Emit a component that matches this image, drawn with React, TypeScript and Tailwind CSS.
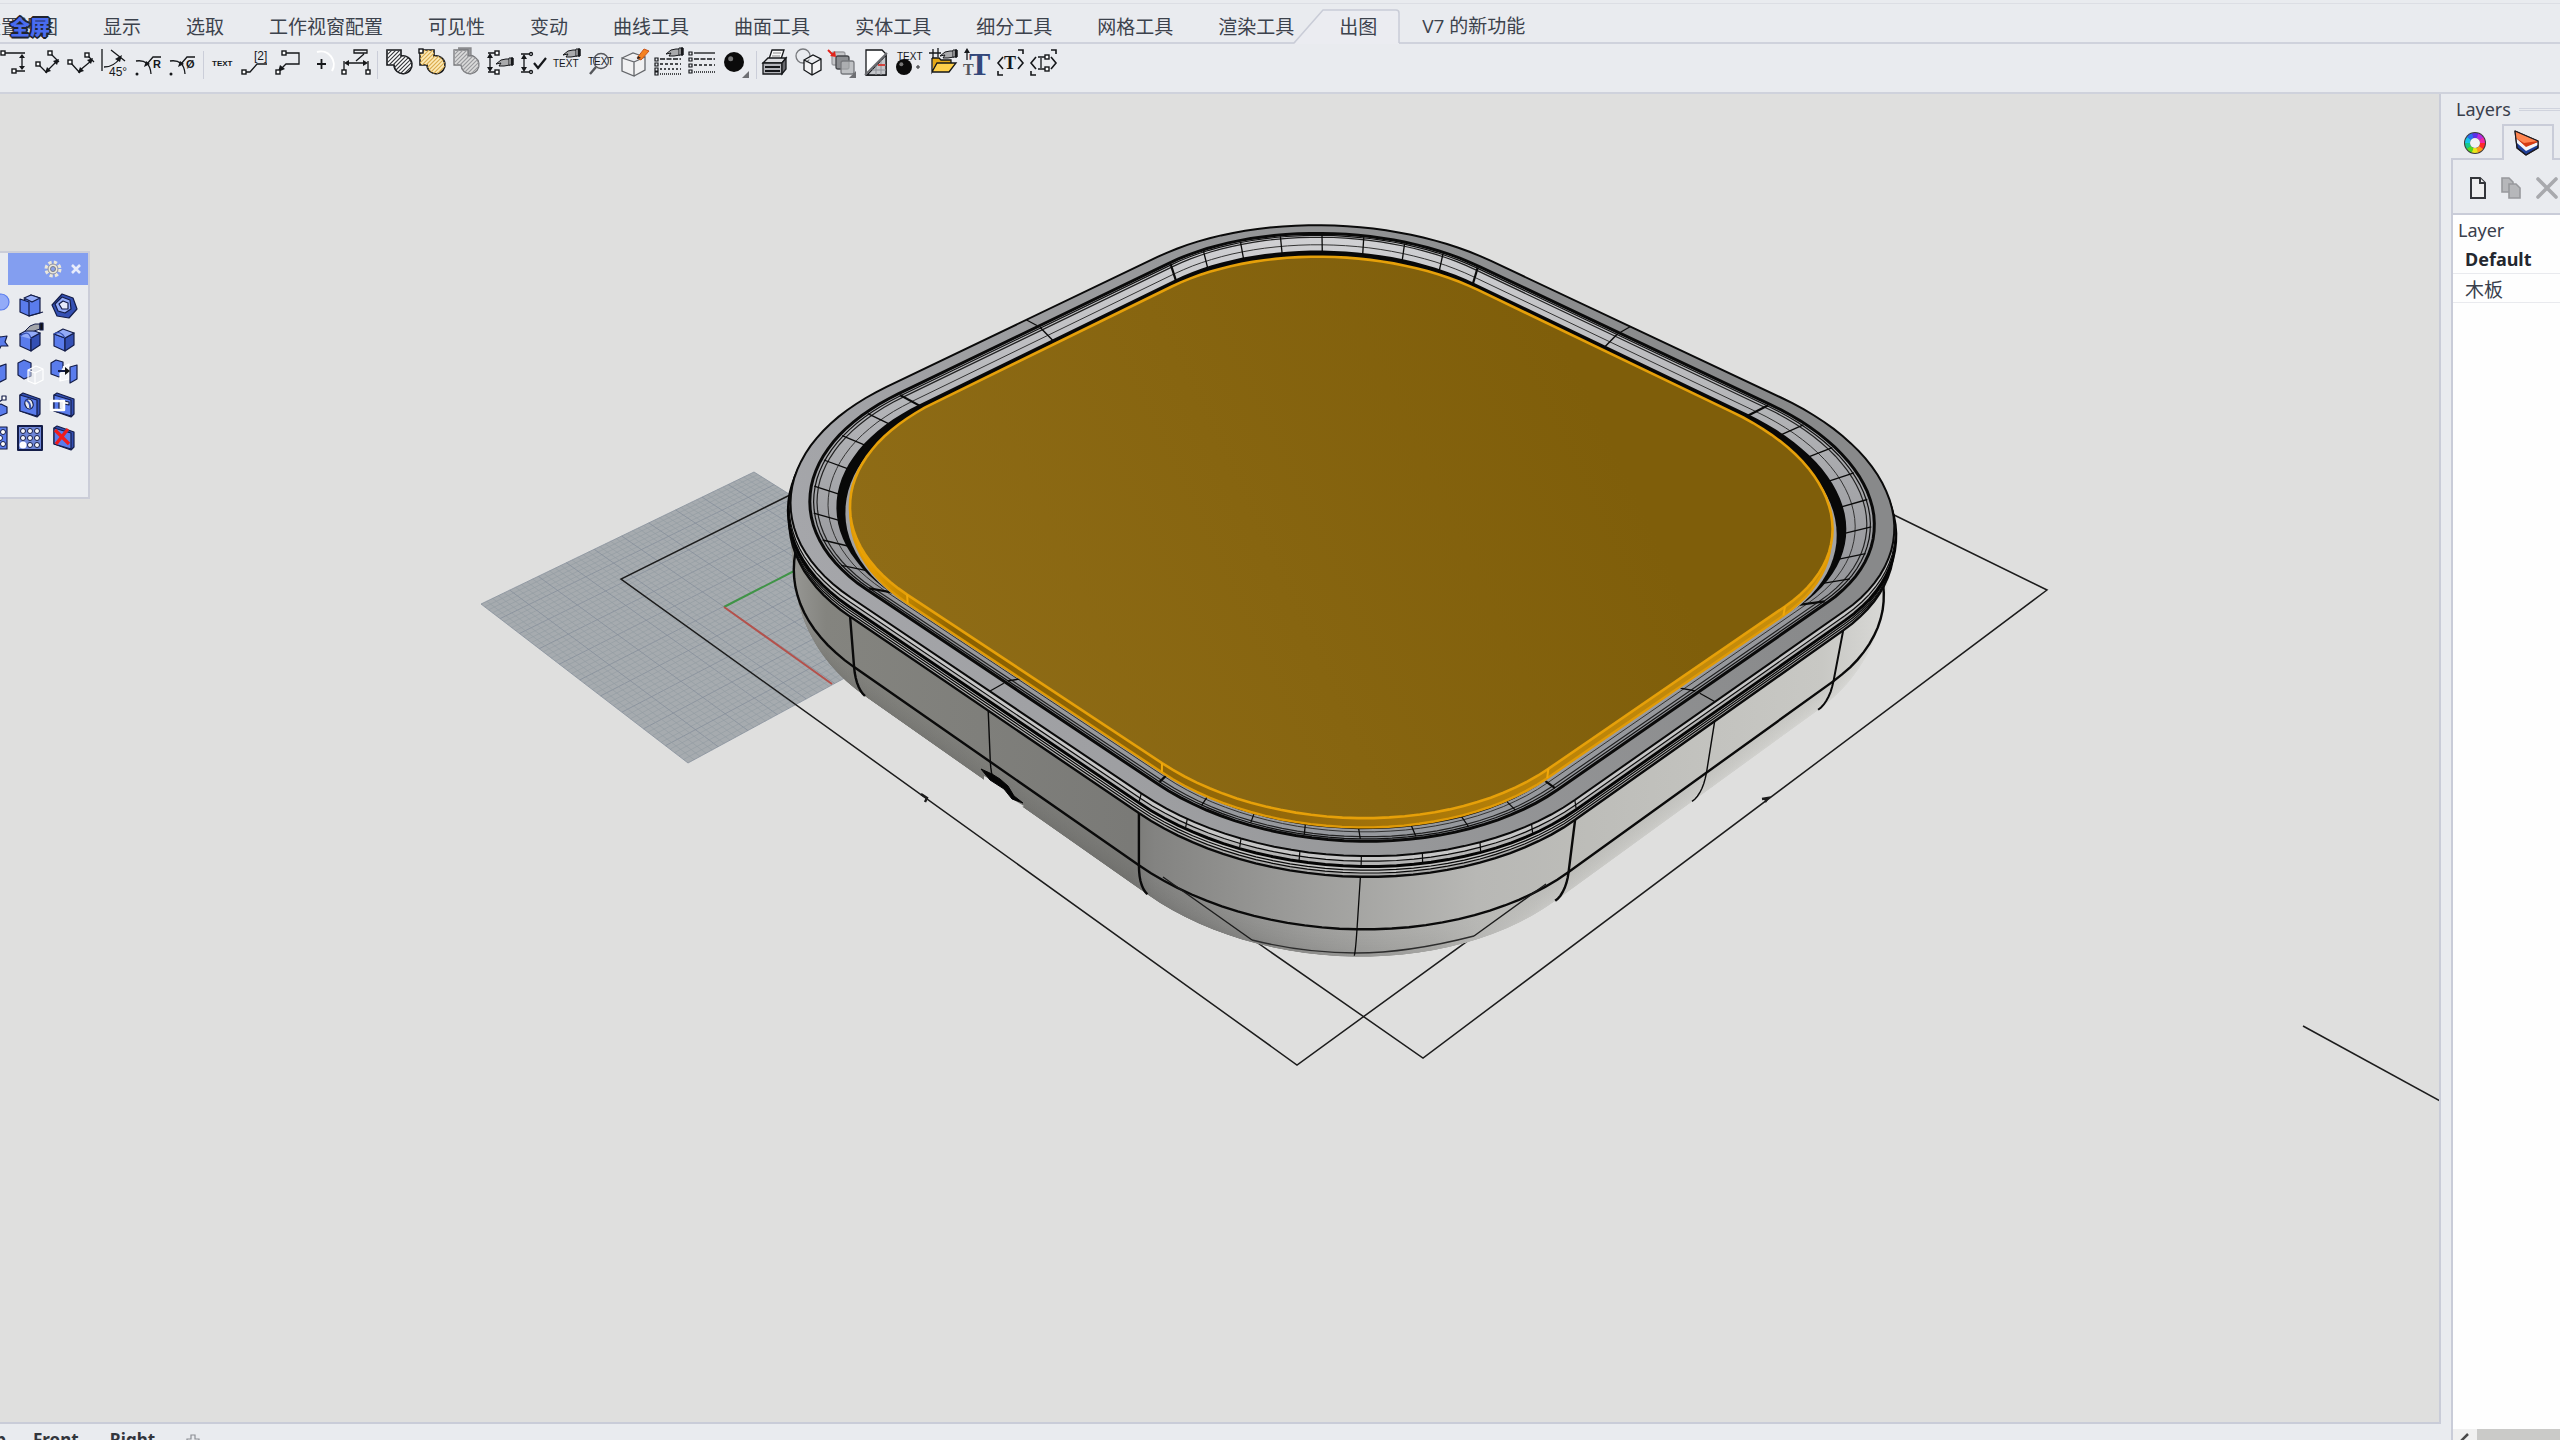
import React from "react";

type Pt = [number, number];
type Kids = { children?: React.ReactNode };

/* ---------- perspective camera ---------- */

function squareToQuad([x0, y0]: Pt, [x1, y1]: Pt, [x2, y2]: Pt, [x3, y3]: Pt) {
  const dx1 = x1 - x2, dx2 = x3 - x2, sx = x0 - x1 + x2 - x3;
  const dy1 = y1 - y2, dy2 = y3 - y2, sy = y0 - y1 + y2 - y3;
  const det = dx1 * dy2 - dy1 * dx2;
  const g = (sx * dy2 - sy * dx2) / det;
  const h = (dx1 * sy - dy1 * sx) / det;
  return (u: number, v: number, z = 0): Pt => {
    const w = g * u + h * v + 1 + z;
    return [
      ((x1 - x0 + g * x1) * u + (x3 - x0 + h * x3) * v + x0 + 1140 * z) / w,
      ((y1 - y0 + g * y1) * u + (y3 - y0 + h * y3) * v + y0 + 4300 * z) / w,
    ];
  };
}

const tray = squareToQuad([1320, 214], [1930, 507], [1363, 896], [752, 492]);
const floor = squareToQuad([754, 472], [972, 609], [688, 763], [481, 604]);

const BOARD = 0.29;
const SHELL = 0.261;
const str = (p: Pt) => `${p[0].toFixed(1)} ${p[1].toFixed(1)}`;

/** Corner q: 0 right, 1 bottom, 2 left, 3 top; t runs 0..1 through the arc; c is the inset of the arc centre. */
function corner(q: number, t: number, d: number, z: number, c = SHELL): Pt {
  const a = ((q - 1 + t) * Math.PI) / 2;
  const cu = q < 2 ? 1 - c : c;
  const cv = q === 1 || q === 2 ? 1 - c : c;
  return tray(cu + Math.cos(a) * (c + d), cv + Math.sin(a) * (c + d), z);
}

function ring(d: number, z: number, c = SHELL) {
  const pts: string[] = [];
  for (let q = 0; q < 4; q++) for (let i = 0; i <= 28; i++) pts.push(str(corner(q, i / 28, d, z, c)));
  return `M${pts.join("L")}Z`;
}

function frontRing(d: number, z: number) {
  const pts: string[] = [];
  for (let q = 0; q < 3; q++)
    for (let i = q === 0 ? 12 : 0; i <= (q === 2 ? 16 : 28); i++) pts.push(str(corner(q, i / 28, d, z)));
  return `M${pts.join("L")}`;
}

const WALL = 0.062;
const bodyLevels = Array.from({ length: 14 }, (_, i) => 0.0138 - (i * 0.0114) / 13);
const filletLevels = Array.from({ length: 20 }, (_, i) => {
  const t = ((1 - i / 19) * Math.PI) / 2;
  return { d: WALL - 0.03 + 0.03 * Math.cos(t), z: 0.0138 + 0.0095 * Math.sin(t), o: 0.42 * (1 - i / 19) };
});

const profile: Pt[] = [
  [WALL, 0.0024],
  [WALL, 0.0138],
  ...Array.from({ length: 7 }, (_, i): Pt => {
    const t = ((i + 1) / 7) * 0.95;
    return [WALL - 0.03 + 0.03 * Math.cos(t), 0.0138 + 0.0095 * Math.sin(t)];
  }),
];
const seam = (f: (d: number, z: number) => Pt) => `M${profile.map(([d, z]) => str(f(d, z))).join("L")}`;

const seams: { d: string; w: number }[] = [
  { d: seam((d, z) => corner(2, 0, d, z)), w: 2.4 },
  { d: seam((d, z) => tray(0.5, 1 + d, z)), w: 1.4 },
  { d: seam((d, z) => corner(1, 1, d, z)), w: 2.4 },
  { d: seam((d, z) => corner(1, 0.5, d, z)), w: 1.3 },
  { d: seam((d, z) => corner(1, 0, d, z)), w: 2.4 },
  { d: seam((d, z) => tray(1 + d, 0.5, z)), w: 1.4 },
  { d: seam((d, z) => corner(0, 1, d, z)), w: 2 },
];

const ticks: { d: string; w: number }[] = [];
for (let q = 0; q < 4; q++)
  for (let i = 0; i <= 8; i++) {
    const w = i === 0 || i === 8 ? 2.2 : 1.3;
    ticks.push({ d: `M${str(corner(q, i / 8, 0.032, -0.0015))}L${str(corner(q, i / 8, 0.006, 0.0004, 0.275))}`, w });
  }
const mids: ((d: number, z: number) => Pt)[] = [
  (d, z) => tray(0.5, 1 + d, z),
  (d, z) => tray(1 + d, 0.5, z),
  (d, z) => tray(0.5, -d, z),
  (d, z) => tray(-d, 0.5, z),
];
mids.forEach((m) => {
  ticks.push({ d: `M${str(m(0.032, -0.0015))}L${str(m(0.006, 0))}`, w: 1.4 });
  ticks.push({ d: `M${str(m(0.058, -0.0015))}L${str(m(0.038, -0.0015))}`, w: 1.2 });
});
const lipTicks = [0, 1, 2, 3, 4, 5, 6, 7, 8].map(
  (i) => `M${str(corner(1, i / 8, 0.0585, -0.0015))}L${str(corner(1, i / 8, 0.0615, 0))}`,
);
const boardSeams = [
  [2, 0],
  [1, 1],
  [1, 0],
  [0, 1],
].map(([q, t]) => `M${str(corner(q, t, 0, 0, BOARD))}L${str(corner(q, t, 0, 0.002, BOARD))}`);

const gridLines: { d: string; major: boolean }[] = [];
for (let i = 0; i <= 50; i++) {
  const k = i / 50;
  gridLines.push({ d: `M${str(floor(k, 0))}L${str(floor(k, 1))}`, major: i % 5 === 0 });
  gridLines.push({ d: `M${str(floor(0, k))}L${str(floor(1, k))}`, major: i % 5 === 0 });
}

function Scene() {
  return (
    <svg className="absolute left-0 top-0" width="2442" height="1423" viewBox="0 0 2442 1423" role="img" aria-label="Perspective viewport" fill="none">
      <defs>
        <linearGradient id="gold" gradientUnits="userSpaceOnUse" x1="900" y1="640" x2="1560" y2="330">
          <stop offset="0" stopColor="#8f6c16" />
          <stop offset="1" stopColor="#7f5e0a" />
        </linearGradient>
        <linearGradient id="goldSide" gradientUnits="userSpaceOnUse" x1="860" y1="0" x2="1820" y2="0">
          <stop offset="0" stopColor="#f0a500" />
          <stop offset=".1" stopColor="#8a6000" />
          <stop offset=".45" stopColor="#94690a" />
          <stop offset=".7" stopColor="#b98208" />
          <stop offset="1" stopColor="#c98f0c" />
        </linearGradient>
        <linearGradient id="wall" gradientUnits="userSpaceOnUse" x1="787" y1="0" x2="1900" y2="0">
          <stop offset="0" stopColor="#9a9a97" />
          <stop offset=".035" stopColor="#84847f" />
          <stop offset=".31" stopColor="#7a7a77" />
          <stop offset=".33" stopColor="#838381" />
          <stop offset=".46" stopColor="#9c9c9a" />
          <stop offset=".62" stopColor="#b8b8b5" />
          <stop offset=".72" stopColor="#bdbdb9" />
          <stop offset=".93" stopColor="#c8c8c4" />
          <stop offset="1" stopColor="#dcdcda" />
        </linearGradient>
        <linearGradient id="under" gradientUnits="userSpaceOnUse" x1="787" y1="0" x2="1900" y2="0">
          <stop offset="0" stopColor="#50504e" />
          <stop offset=".4" stopColor="#4c4c4a" />
          <stop offset=".58" stopColor="#7c7c7a" />
          <stop offset=".68" stopColor="#f4f4f4" />
          <stop offset="1" stopColor="#ffffff" />
        </linearGradient>
        <linearGradient id="rim" gradientUnits="userSpaceOnUse" x1="790" y1="600" x2="1700" y2="260">
          <stop offset="0" stopColor="#a6a7ab" />
          <stop offset=".45" stopColor="#98999b" />
          <stop offset="1" stopColor="#88898a" />
        </linearGradient>
        <linearGradient id="trough" gradientUnits="userSpaceOnUse" x1="0" y1="225" x2="0" y2="850">
          <stop offset="0" stopColor="#d2d2d5" />
          <stop offset=".25" stopColor="#b8b9bc" />
          <stop offset=".55" stopColor="#97989c" />
          <stop offset="1" stopColor="#96999e" />
        </linearGradient>
      </defs>

      {/* construction plane */}
      <path d="M754 472L972 609L688 763L481 604Z" fill="#a6abaf" />
      {gridLines.map((l, i) => (
        <path key={i} d={l.d} stroke={l.major ? "#848e9a" : "#949ca3"} strokeWidth="1" strokeOpacity={l.major ? 0.75 : 0.65} />
      ))}
      <path d="M724 607L800 568" stroke="#3f9446" strokeWidth="2" />
      <path d="M724 607L832 684" stroke="#b4514b" strokeWidth="2" />

      {/* curves lying on the floor */}
      <g stroke="#1c1c1c" strokeWidth="1.5">
        <path d="M800 490L621 579L1297 1065L1546 884" />
        <path d="M1890 513L2047 590L1423 1058L1163 877" />
        <path d="M2303 1026L2442 1102" />
        <path d="M921 794l6 4l-2 4M1762 799l6-1l-3 4" strokeWidth="2.4" />
      </g>

      {/* tray body */}
      {filletLevels.map((l, i) => (
        <g key={i}>
          <path d={ring(l.d, l.z)} fill="url(#wall)" />
          <path d={ring(l.d, l.z)} fill="url(#under)" fillOpacity={l.o} />
        </g>
      ))}
      {bodyLevels.map((z, i) => (
        <path key={i} d={ring(WALL, z)} fill="url(#wall)" />
      ))}
      <path d={frontRing(WALL, 0.0138)} stroke="#0a0a0a" strokeWidth="2.4" />
      <path d="M1252 940Q1304 953 1356 953T1474 936" stroke="#2c2c2c" strokeWidth="1.4" />
      {seams.map((s, i) => (
        <path key={i} d={s.d} stroke="#0a0a0a" strokeWidth={s.w} />
      ))}
      <path d="M984 776L1000 784L1008 790L1014 800L1024 806L1012 812L984 790Z" fill="#dfdfde" />
      <path d="M981 769L992 774L1000 779L1008 786L1014 796L1023 803L1012 799L1004 789L990 780Z" fill="#050505" stroke="#050505" strokeWidth="1" />
      <path d="M1163 877L1252 940M1474 936L1546 884" stroke="#1c1c1c" strokeWidth="1.4" />

      {/* stepped lip below the rim */}
      <path d={ring(WALL, 0.0024)} fill="#a9a9a8" stroke="#0a0a0a" strokeWidth="2.4" />
      <path d={ring(0.062, 0.0016)} fill="#c2c2c1" stroke="#0a0a0a" strokeWidth="1.2" />
      <path d={ring(0.062, 0.001)} fill="#c2c2c1" stroke="#0a0a0a" strokeWidth="1.2" />
      <path d={ring(0.062, 0.0002)} fill="#b4b4b4" stroke="#050505" strokeWidth="3" />
      <path d={ring(0.0605, -0.0007)} fill="#c6c6c6" stroke="#0a0a0a" strokeWidth="1.2" />
      <path d={ring(0.0585, -0.0015)} fill="url(#rim)" stroke="#0a0a0a" strokeWidth="2" />

      {/* inner trough */}
      <path d={ring(0.0355, -0.0015)} fill="url(#trough)" stroke="#0a0a0a" strokeWidth="3" />
      <path d={ring(0.031, -0.0014)} stroke="#111" strokeWidth="1.2" />
      <path d={ring(0.027, -0.0013)} stroke="#222" strokeWidth="1.2" />
      <path d={ring(0.017, -0.0006, 0.268)} stroke="#333" strokeWidth="1" />
      {ticks.map((s, i) => (
        <path key={i} d={s.d} stroke="#0a0a0a" strokeWidth={s.w} />
      ))}
      {lipTicks.map((d, i) => (
        <path key={i} d={d} stroke="#0a0a0a" strokeWidth="1.2" />
      ))}
      <path d={ring(0.009, 0.0001, 0.275)} fill="#080808" stroke="#080808" strokeWidth="2" />
      <path d={ring(0.006, 0.0012, BOARD)} fill="#a2a3a6" />

      {/* wooden board */}
      <path d={ring(0, 0.002, BOARD)} fill="url(#goldSide)" stroke="#e09a06" strokeWidth="2.4" />
      <path d={ring(0, 0, BOARD)} fill="url(#gold)" stroke="#e6a009" strokeWidth="2.6" />
      {boardSeams.map((d, i) => (
        <path key={i} d={d} stroke="#f0a80a" strokeWidth="2" />
      ))}
    </svg>
  );
}

/* ---------- toolbar icons ---------- */

const K = "#15171a";

function Icon({ children, label }: Kids & { label: string }) {
  return (
    <button type="button" aria-label={label} className="flex h-8 min-w-0 flex-1 items-center justify-center">
      <svg width="28" height="28" viewBox="0 0 28 28" fill="none" stroke={K} strokeWidth="1.3" className="shrink-0 overflow-visible">
        {children}
      </svg>
    </button>
  );
}

const Sq = ({ x, y }: { x: number; y: number }) => <rect x={x - 2} y={y - 2} width="4" height="4" fill="#fff" strokeWidth="1.4" />;
const T = ({ x, y, s = 11, b = true, f = "Liberation Sans", c = K, children }: Kids & { x: number; y: number; s?: number; b?: boolean; f?: string; c?: string }) => (
  <text x={x} y={y} fontSize={s} fontWeight={b ? 700 : 400} fontFamily={`${f}, sans-serif`} fill={c} stroke="none">
    {children}
  </text>
);
const Hand = ({ x, y }: { x: number; y: number }) => (
  <g transform={`translate(${x} ${y})`} strokeWidth="1">
    <path d="M0 6L5 2L10 1H14V7L8 8H3L5 5Z" fill="#a9aaac" />
    <path d="M13 0H17V7H13Z" fill="#fff" />
    <path d="M15 0H17V7H15Z" fill="#1b1b1b" />
  </g>
);
const UNION = "M2 1H16V7A9 9 0 1 1 9 16H2Z";
const Hatch = ({ c }: { c: string }) => (
  <g>
    <clipPath id="union-clip"><path d={UNION} /></clipPath>
    <path clipPath="url(#union-clip)" d="M-2 6L8 -4M-2 10L12 -4M-2 14L16 -4M-2 18L20 -4M2 18L24 -4M6 18L24 0M6 22L28 0M8 24L28 4M10 26L30 6M12 28L30 10M16 28L30 14M20 28L30 18" stroke={c} strokeWidth="1.2" />
  </g>
);
const Corner = () => <path d="M28 22V29H21Z" fill="#6e6f73" stroke="none" />;
const Ball = ({ x, y, r }: { x: number; y: number; r: number }) => (
  <g stroke="none">
    <circle cx={x} cy={y} r={r} fill="#0b0b0b" />
    <circle cx={x - r / 3} cy={y - r / 3} r={r / 4} fill="#777" />
  </g>
);

const dims = (
  <>
    <Icon label="Vertical dimension">
      <path d="M4 4H26M15 22H26M23 7V19" />
      <path d="M23 5L20 9H26ZM23 21L20 17H26Z" fill={K} stroke="none" />
      <Sq x={4} y={4} /><Sq x={15} y={22} />
    </Icon>
    <Icon label="Aligned dimension">
      <path d="M17 4L26 13M5 15L14 24M14 22L24 12" />
      <path d="M26 10L20 12L24 16ZM12 24L18 22L14 18Z" fill={K} stroke="none" />
      <Sq x={17} y={4} /><Sq x={5} y={15} />
    </Icon>
    <Icon label="Rotated dimension">
      <path d="M20 6L27 13M3 13L13 24M12 22L24 12" />
      <path d="M26 9L20 11L24 15ZM11 24L17 22L13 18Z" fill={K} stroke="none" />
      <Sq x={3} y={13} /><Sq x={20} y={6} />
    </Icon>
    <Icon label="Angle dimension">
      <path d="M2 0V22M11 1L25 12M4 18Q14 18 20 9" />
      <path d="M22 6L15 10L20 13Z" fill={K} stroke="none" />
      <T x={9} y={27} s={12} b={false}>45°</T>
    </Icon>
    <Icon label="Radius dimension">
      <path d="M2 12Q16 10 17 25M27 8H19L13 15" /><path d="M10 18L12 12L16 15Z" fill={K} stroke="none" />
      <circle cx="3" cy="25" r="1.500" fill={K} stroke="none" /><T x={19} y={19}>R</T>
    </Icon>
    <Icon label="Diameter dimension">
      <path d="M2 12Q16 10 17 25M27 8H19L13 15" /><path d="M10 18L12 12L16 15Z" fill={K} stroke="none" />
      <circle cx="3" cy="25" r="1.500" fill={K} stroke="none" /><T x={18} y={19}>Ø</T>
    </Icon>
  </>
);

const notes = (
  <>
    <Icon label="Text"><T x={4} y={17} s={8}>TEXT</T></Icon>
    <Icon label="Numbered leader">
      <path d="M3 23H9L16 15H26" /><Sq x={3} y={23} /><T x={13} y={11} s={12} b={false}>[2]</T>
    </Icon>
    <Icon label="Leader">
      <path d="M9 4H24V15H11L6 20" /><path d="M3 23L5 16L10 20Z" fill={K} stroke="none" />
      <Sq x={9} y={4} /><Sq x={3} y={23} />
    </Icon>
    <Icon label="Center mark">
      <path d="M8 3A13 13 0 0 1 23 22" stroke="#fff" strokeWidth="2" /><path d="M8 15H17M12.500 10V20" strokeWidth="1.800" />
    </Icon>
    <Icon label="Edit dimension">
      <path d="M2 22V12M26 22V12M4 14H24M12 1H25V4H12ZM22 5L14 12" />
      <path d="M2 14L7 11V17ZM26 14L21 11V17Z" fill={K} stroke="none" />
      <Sq x={2} y={23} /><Sq x={26} y={23} />
    </Icon>
  </>
);

const drafting = (
  <>
    <Icon label="Hatch"><path d={UNION} fill="#fff" strokeWidth="1.600" /><Hatch c="#3b3d41" /></Icon>
    <Icon label="Hatch boundary">
      <path d={UNION} fill="#fdebb8" strokeWidth="1.600" /><Hatch c="#dcae52" /><Sq x={3} y={2} />
    </Icon>
    <Icon label="Match hatch">
      <path d="M6 -1H19V6A8 8 0 1 1 10 18" fill="#96979a" stroke="#88898c" /><path d={UNION} fill="#dcdcdc" stroke="#77787b" /><Hatch c="#9b9c9f" />
    </Icon>
    <Icon label="Dimension properties">
      <path d="M2 4H10M2 23H10M4 6V21" /><path d="M4 4L1 9H7ZM4 23L1 18H7Z" fill={K} stroke="none" />
      <Sq x={11} y={4} /><Sq x={11} y={23} /><Hand x={10} y={9} />
    </Icon>
    <Icon label="Set dimension style">
      <path d="M2 5H11M2 23H11M5 7V21" /><path d="M5 5L2 10H8ZM5 23L2 18H8Z" fill={K} stroke="none" />
      <circle cx="12" cy="5" r="1.500" /><circle cx="12" cy="23" r="1.500" /><path d="M15 14L19 19L27 9" strokeWidth="2.200" />
    </Icon>
    <Icon label="Text properties"><T x={0} y={18} s={10} b={false}>TEXT</T><Hand x={10} y={0} /></Icon>
    <Icon label="Find text">
      <T x={1} y={16} s={10} b={false}>TEXT</T><circle cx="14" cy="12" r="7.500" stroke="#55575b" /><path d="M9 18L3 25" stroke="#55575b" strokeWidth="2.400" />
    </Icon>
    <Icon label="Make 2D drawing">
      <path d="M2 9L14 13V27L2 22ZM14 13L25 8V21L14 27M2 9L13 4L25 8" fill="#f1f1f2" stroke="#66686c" />
      <path d="M17 9L24 0L29 2L21 11Z" fill="#f58220" stroke="#c9551a" strokeWidth="1" /><path d="M17 10L18 7L21 9Z" fill="#222" stroke="none" />
    </Icon>
    <Icon label="Linetype properties">
      <path d="M1 9H4V12H1ZM1 14H4V17H1ZM1 19H4V22H1ZM1 23H4V26H1Z" strokeWidth="1.200" />
      <path d="M6 10H27" strokeDasharray="5 1.500" /><path d="M6 15H27" strokeDasharray="3 2" /><path d="M6 20H27" strokeDasharray="2 2" /><path d="M6 25H27" strokeDasharray="1 1" />
      <Hand x={12} y={-1} />
    </Icon>
    <Icon label="Linetypes">
      <path d="M1 3H4V6H1ZM1 9H4V12H1ZM1 15H4V18H1ZM1 21H4V24H1Z" strokeWidth="1.200" />
      <path d="M6 4H27" /><path d="M6 10H27" strokeDasharray="5 1.500" /><path d="M6 16H27" strokeDasharray="3 2" /><path d="M6 23H27" strokeDasharray="1 1" />
    </Icon>
    <Icon label="Dot"><Ball x={13} y={13} r={10} /><Corner /></Icon>
  </>
);

const output = (
  <>
    <Icon label="Print">
      <path d="M8 10L11 1H23L20 10" fill="#fafafa" /><path d="M12 4H20M11 7H19" stroke="#888" strokeWidth="1" />
      <path d="M2 14L7 9H25L21 14Z" fill="#dcdde0" /><path d="M2 14H21V25H2Z" fill="#b4b5ba" /><path d="M21 14L25 9V20L21 25Z" fill="#66676c" />
      <path d="M4 18H19M4 22H19" strokeWidth="1.800" />
    </Icon>
    <Icon label="Page layout">
      <circle cx="8" cy="7" r="7" stroke="#77797d" />
      <path d="M9 11L18 6L26 10V21L17 26L9 21ZM9 11L17 15L26 10M17 15V26" fill="#f4f4f5" fillOpacity=".8" />
    </Icon>
    <Icon label="Detail views">
      <rect x="4" y="3" width="13" height="13" rx="2" fill="#c4c5c8" stroke="#9b9ca0" />
      <rect x="8" y="7" width="13" height="13" rx="2" fill="#8b8d91" stroke="#44464a" />
      <rect x="13" y="12" width="13" height="13" rx="2" fill="#b4b6b9" fillOpacity=".8" stroke="#77797d" />
      <path d="M0 1L5 6" stroke="#e2231a" strokeWidth="2" /><path d="M8 8L2 7L7 2Z" fill="#e2231a" stroke="none" /><Corner />
    </Icon>
    <Icon label="Clipping drawing">
      <path d="M4 1H20L24 5V26H4Z" fill="#fff" /><path d="M24 6V26H5Z" fill="#c4c6ca" /><path d="M10 21H24M15 16H24M14 16V26M19 11V26" stroke="#909298" strokeWidth="1" />
      <path d="M16 16H23" stroke="#e2231a" strokeWidth="1.500" /><path d="M3 26L25 4" stroke="#6b6d71" strokeWidth="2" />
    </Icon>
    <Icon label="Text dot">
      <T x={1} y={11} s={10} b={false}>TEXT</T><Ball x={8} y={18} r={8} /><circle cx="22" cy="18" r="1.200" strokeWidth="1" />
    </Icon>
    <Icon label="Import annotation styles">
      <path d="M3 9H10L12 11H22V15H8L4 22" fill="#e5a816" /><path d="M3 9V23L8 14H27L20 23H3Z" fill="#ffd04a" />
      <path d="M0 4H12M4 0V9M9 -1V8" strokeWidth="1.300" /><Hand x={11} y={1} />
    </Icon>
    <Icon label="Scale text">
      <T x={6} y={26} s={32} f="Liberation Serif" c="#33477a">T</T><T x={0} y={26} s={16} f="Liberation Serif" c="#55575c">T</T>
      <path d="M4 3V11" /><path d="M4 -1L1 4H7Z" fill={K} stroke="none" />
    </Icon>
    <Icon label="Text style">
      <path d="M6 8L1 14L6 20M21 8L26 14L21 20M21 1H26V5M1 22V26H6" strokeWidth="1.600" /><T x={7} y={20} s={18} f="Liberation Serif">T</T>
    </Icon>
    <Icon label="Dimension style">
      <path d="M6 8L1 14L6 20M21 8L26 14L21 20M21 1H26V5M1 22V26H6" strokeWidth="1.600" /><path d="M8 8H17M8 20H17M11 9V19" />
      <Sq x={17} y={8} /><Sq x={17} y={20} />
    </Icon>
  </>
);

/* ---------- ribbon ---------- */

const tabs = ["显示", "选取", "工作视窗配置", "可见性", "变动", "曲线工具", "曲面工具", "实体工具", "细分工具", "网格工具", "渲染工具"];

function Ribbon() {
  return (
    <header className="shrink-0 bg-[#e9ebef]">
      <div className="h-1 border-b border-[#dcdee4]" />
      <nav className="relative flex h-10 items-stretch gap-[45px] whitespace-nowrap border-b-2 border-[#cfd2dc] text-[19px] text-[#3c424c]">
        <button type="button" className="relative -ml-[18px] shrink-0 pt-1.5">
          设置视图
          <span className="absolute left-7 top-[13px] text-[20px] font-black leading-none text-[#4a6cf0] [text-shadow:2px_0_#20242e,-2px_0_#20242e,0_2px_#20242e,0_-2px_#20242e,1px_1px_#20242e,-1px_-1px_#20242e,1px_-1px_#20242e,-1px_1px_#20242e]">全屏</span>
        </button>
        {tabs.map((t) => (
          <button key={t} type="button" className="shrink-0 pt-1.5">{t}</button>
        ))}
        <button type="button" aria-current="true" className="relative shrink-0 pt-1.5">
          <svg className="absolute -left-[46px] top-[5px]" width="108" height="35" viewBox="0 0 108 35" fill="none">
            <path d="M1 35L30 1H103Q106 1 106 4V35Z" fill="#ebecf1" />
            <path d="M1 34L30 1H103Q106 1 106 4V34" stroke="#c9ccd7" strokeWidth="1.500" />
          </svg>
          <span className="relative">出图</span>
        </button>
        <button type="button" className="shrink-0 pt-1.5 font-['Open_Sans','Noto_Sans_CJK_SC',sans-serif]">V7 的新功能</button>
      </nav>
      <div className="flex h-[50px] items-start border-b-2 border-[#cfd2dc] pt-[3px]">
        <div className="-ml-1 flex w-[203px]">{dims}</div>
        <div className="ml-1 mr-px mt-1 h-7 w-px bg-[#cbced9]" />
        <div className="flex w-[168px]">{notes}</div>
        <div className="mx-1 mt-1 h-7 w-px bg-[#cbced9]" />
        <div className="flex w-[370px]">{drafting}</div>
        <div className="ml-1 mr-px mt-1 h-7 w-px bg-[#cbced9]" />
        <div className="flex w-[303px]">{output}</div>
      </div>
    </header>
  );
}

/* ---------- floating palette ---------- */

const B = "#5a7cec";
const BL = "#93abf8";
const BD = "#3450b4";

function Tool({ children, label }: Kids & { label: string }) {
  return (
    <button type="button" aria-label={label} className="flex h-[33px] w-[34px] items-center justify-center">
      <svg width="26" height="26" viewBox="0 0 26 26" fill="none" stroke="#141d48" strokeWidth="1.200" strokeLinejoin="round" className="overflow-visible">
        {children}
      </svg>
    </button>
  );
}

const Cube = () => (
  <>
    <path d="M3 8L14 12V25L3 20Z" fill={B} />
    <path d="M14 12L23 7V19L14 25Z" fill={BD} />
    <path d="M3 8L12 3L23 7L14 12Z" fill={BL} />
  </>
);
const Plate = () => (
  <>
    <path d="M3 3L6 1L23 7V22L20 25L3 19Z" fill={BD} />
    <path d="M3 3L20 8V24L3 19Z" fill={B} />
  </>
);

function Palette() {
  return (
    <section className="absolute left-0 top-[157px] h-[248px] w-[90px] overflow-hidden border-2 border-l-0 border-[#cbcdd8] bg-[#e9ebef]">
      <div className="flex h-8 pl-2">
        <div className="flex flex-1 items-center justify-end gap-2 bg-[#839ef0] pr-1.5">
          <button type="button" aria-label="Options">
            <svg width="18" height="18" viewBox="0 0 18 18" fill="none">
              <circle cx="9" cy="9" r="6.500" stroke="#eae7db" strokeWidth="4" strokeDasharray="3 2.100" />
              <circle cx="9" cy="9" r="5" fill="#eae7db" stroke="#8f919b" strokeWidth="1" />
              <circle cx="9" cy="9" r="2.500" fill="#8ba1e8" stroke="#7d7f86" />
            </svg>
          </button>
          <button type="button" aria-label="Close">
            <svg width="12" height="12" viewBox="0 0 12 12" stroke="#e8ecfb" strokeWidth="2.600"><path d="M2 2L10 10M10 2L2 10" /></svg>
          </button>
        </div>
      </div>
      <div className="-ml-[21px] grid w-[102px] grid-cols-3 pt-1">
        <Tool label="Sphere"><circle cx="18" cy="9" r="8" fill={BL} stroke={B} /></Tool>
        <Tool label="Extrude">
          <path d="M7 7L14 2L23 5V20L12 23Z" fill={B} /><path d="M3 6L12 9V23L3 19Z" fill={B} /><path d="M7 5L14 2L23 5L15 9Z" fill={BL} /><path d="M12 23L26 19" />
        </Tool>
        <Tool label="Pipe">
          <path d="M11 1L22 5L26 16L18 25L6 23L1 12Z" fill={BD} /><path d="M11 4L19 7L20 16L14 20L7 18L4 11Z" fill={BL} /><path d="M12 8L17 10V16L11 16L8 11Z" fill="#e6ebfb" />
        </Tool>
        <Tool label="Boolean"><path d="M8 8L14 6L17 11L24 10L22 16L25 20L18 20L16 24L12 21L6 22Z" fill={B} /></Tool>
        <Tool label="Edit fillet"><Cube /><path d="M3 10Q12 3 14 13" fill={BL} stroke={BD} /><path d="M8 5L13 0L18 -2H23V3L17 5Z" fill="#a3a5aa" strokeWidth="1" /><path d="M23 -3H26V4H23Z" fill="#111" /></Tool>
        <Tool label="Fillet edge"><Cube /><path d="M3 8Q10 4 14 12" stroke={BD} /></Tool>
        <Tool label="Wire cut"><path d="M15 8L23 5V20L15 24Z" fill={B} /><path d="M8 13H14" /></Tool>
        <Tool label="Extract wireframe"><path d="M1 4L7 1L14 4V17L7 20L1 16Z" fill={B} /><path d="M11 11L19 7L26 10V21L18 25L11 22ZM11 11L18 14L26 10M18 14V25" stroke="#fff" fill="#e9ebef" fillOpacity=".5" /></Tool>
        <Tool label="Move face"><path d="M0 4L5 1L12 3V15L8 18L0 15Z" fill={B} /><path d="M12 8L18 5V20L9 22V14" fill="#f4f5f8" stroke="#fff" /><path d="M19 8L26 6V20L19 24Z" fill={B} /><path d="M7 12H17" strokeWidth="2" /><path d="M19 12L14 8V16Z" fill="#111" stroke="none" /></Tool>
        <Tool label="Extrude face"><path d="M4 17L18 12L24 15V21L12 26Z" fill={B} /><path d="M19 4H23V8H19ZM19 8L13 12" fill="#fff" /></Tool>
        <Tool label="Round hole"><Plate /><ellipse cx="12" cy="12" rx="4" ry="5" fill="#e9ebef" transform="rotate(-20 12 12)" /><path d="M9 8Q14 11 13 16" stroke={BD} strokeWidth="2" /></Tool>
        <Tool label="Place hole"><Plate /><path d="M8 8L18 10V13L13 12V18L8 17Z" fill="#e9ebef" /><path d="M0 9H13V18H0Z" stroke="#fff" strokeWidth="2.500" /></Tool>
        <Tool label="Array hole"><path d="M1 2H24V24H1Z" fill={B} /><g fill="#fff" strokeWidth="1"><circle cx="20" cy="7" r="2.500" /><circle cx="17" cy="13" r="2.500" /><circle cx="20" cy="19" r="2.500" /></g></Tool>
        <Tool label="Grid of holes">
          <path d="M1 1H25V25H1Z" fill="#6e86d8" strokeWidth="2" />
          <g fill="#f5f6fa" strokeWidth="1">
            {[6, 13, 20].flatMap((y) => [6, 13, 20].map((x) => <circle key={`${x}-${y}`} cx={x} cy={y} r="2.500" />))}
          </g>
          <circle cx="6" cy="20" r="3.500" fill="#fff" stroke="none" />
        </Tool>
        <Tool label="Delete hole"><Plate /><path d="M4 5L18 19M17 4L5 19" stroke="#f01c1c" strokeWidth="3.200" /></Tool>
      </div>
    </section>
  );
}

/* ---------- layers panel ---------- */

const wheel = ["#ff2a2a", "#ff9a1a", "#e9e51a", "#52d726", "#18c98b", "#18c3e8", "#2a6cf0", "#5b30e8", "#b52be0", "#f028a8"];

function LayersPanel() {
  return (
    <aside className="flex w-[109px] shrink-0 flex-col overflow-hidden bg-[#e9ebef] font-['Noto_Sans','Noto_Sans_CJK_SC',sans-serif] text-[18px] text-[#39404c]">
      <div className="flex h-7 items-center gap-2 pl-[5px] pt-0.5">
        <h2>Layers</h2>
        <div className="h-[3px] flex-1 border-y border-[#d0d3dd]" />
      </div>
      <div className="mt-0.5 flex h-9">
        <button type="button" aria-label="Properties" className="flex w-[51px] items-center justify-center border-b-2 border-[#c9ccd8] pr-1 pt-1">
          <svg width="24" height="24" viewBox="0 0 24 24" fill="none">
            <circle cx="12" cy="12" r="11" fill="#3a3a3a" />
            {wheel.map((c, i) => (
              <circle key={c} cx="12" cy="12" r="7.500" stroke={c} strokeWidth="5" strokeDasharray="5 43" strokeDashoffset={-i * 4.7} />
            ))}
            <circle cx="12" cy="12" r="5" fill="#f1f1f4" />
          </svg>
        </button>
        <button type="button" aria-label="Layers" className="flex w-[52px] items-center justify-center border-x-2 border-t-2 border-[#c9ccd8] pr-0.5">
          <svg width="26" height="26" viewBox="0 0 26 26" stroke="#1d1a20" strokeWidth="1.200" strokeLinejoin="round">
            <path d="M1 1L24 11V18L12 25L3 18Z" fill="#1f3f98" />
            <path d="M2 8L12 16L24 12V15L12 21L3 13Z" fill="#f4f5f8" stroke="none" />
            <path d="M1 1L24 11V12L12 17L2 8Z" fill="#d63c12" stroke="none" />
            <path d="M1 1L24 11L10 13L2 8Z" fill="#ff8550" stroke="none" />
            <path d="M1 1L24 11V18L12 25L3 18Z" fill="none" />
          </svg>
        </button>
        <div className="flex-1 border-b-2 border-[#c9ccd8]" />
      </div>
      <div className="flex h-[55px] shrink-0 items-center gap-3.5 border-l-2 border-b-2 border-[#c9ccd8] pl-4 pt-0.5">
        <button type="button" aria-label="New layer" className="shrink-0">
          <svg width="18" height="24" viewBox="0 0 18 24" fill="#eeeeef" stroke="#33353a" strokeWidth="2"><path d="M2 2H11L16 7V22H2Z" /><path d="M11 2V7H16" /></svg>
        </button>
        <button type="button" aria-label="New sublayer" className="shrink-0">
          <svg width="20" height="24" viewBox="0 0 20 24" fill="#b6b7ba" stroke="#98999d" strokeWidth="1.600"><path d="M1 2H8L12 6V16H1Z" /><path d="M8 8H15L19 12V22H8Z" /></svg>
        </button>
        <button type="button" aria-label="Delete layer" className="shrink-0">
          <svg width="24" height="24" viewBox="0 0 24 24" stroke="#a8a9ad" strokeWidth="3.600" strokeLinecap="round"><path d="M3 3L21 21M21 3L3 21" /></svg>
        </button>
      </div>
      <div className="flex min-h-0 flex-1 flex-col border-l-2 border-[#c9ccd8] bg-[#fefefe]">
        <table className="w-full text-left">
          <thead>
            <tr className="h-[30px]"><th className="pl-[5px] font-normal leading-6">Layer</th></tr>
          </thead>
          <tbody>
            <tr className="h-7 border-b border-[#e9eaee]"><td className="pl-3 font-bold leading-6 text-[#23272f]">Default</td></tr>
            <tr className="h-7 border-b border-[#e9eaee]"><td className="pl-3 pt-1 text-[19px] leading-6">木板</td></tr>
          </tbody>
        </table>
      </div>
      <div className="flex h-[11px] shrink-0 border-l-2 border-[#c9ccd8] bg-[#cacac8]">
        <button type="button" aria-label="Scroll left" className="w-6 overflow-hidden bg-[#f0f0f0]">
          <svg className="ml-1.5" width="12" height="16" viewBox="0 0 12 16" fill="none" stroke="#4a4a4a" strokeWidth="2.500"><path d="M9 5L3 11L9 17" /></svg>
        </button>
      </div>
    </aside>
  );
}

export default function App() {
  return (
    <div className="flex h-screen flex-col overflow-hidden bg-[#e9ebef] font-['Noto_Sans_CJK_SC',sans-serif]">
      <Ribbon />
      <div className="flex min-h-0 flex-1">
        <div className="flex min-w-0 flex-1 flex-col">
          <main className="relative min-h-0 flex-1 overflow-hidden border-b-2 border-r-2 border-[#c9ccd8] bg-[#dfdfde]">
            <div className="absolute left-0 top-0 -mt-[94px] h-full w-full">
              <Scene />
            </div>
            <Palette />
          </main>
          <nav className="flex h-4 items-start gap-[27px] overflow-hidden whitespace-nowrap font-['Noto_Sans',sans-serif] text-[17px] font-bold leading-6 text-[#33363c]">
            <button type="button" className="-ml-6 mt-1">Top</button>
            <button type="button" className="mt-1">Front</button>
            <button type="button" className="ml-1 mt-1">Right</button>
            <button type="button" aria-label="Add page" className="ml-1 mt-2.5">
              <svg width="14" height="14" viewBox="0 0 14 14" fill="none" stroke="#8d8f95" strokeWidth="1.200"><path d="M5 1H9V5H13V9H9V13H5V9H1V5H5Z" /></svg>
            </button>
          </nav>
        </div>
        <div className="w-2.5 shrink-0" />
        <LayersPanel />
      </div>
    </div>
  );
}
